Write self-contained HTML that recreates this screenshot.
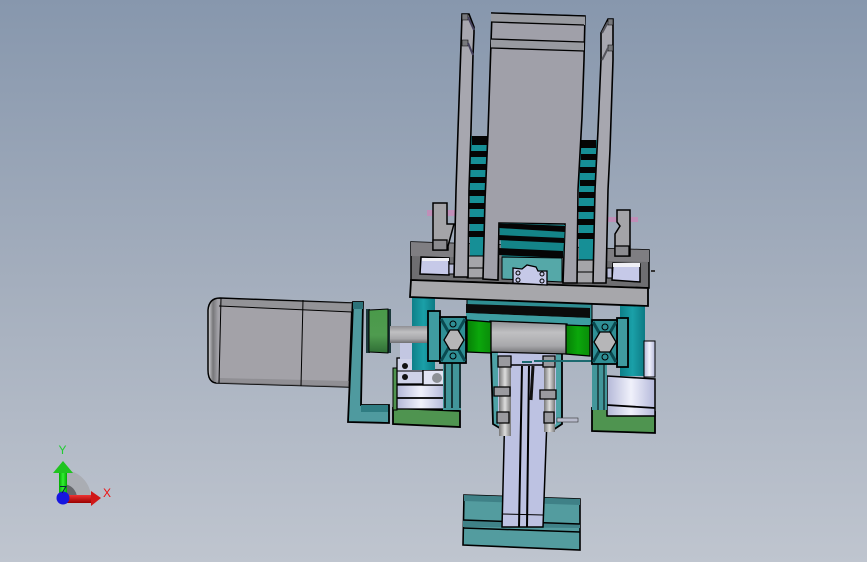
<!DOCTYPE html>
<html><head><meta charset="utf-8"><style>
html,body{margin:0;padding:0;width:867px;height:562px;overflow:hidden;background:#a3aebd}
svg{display:block}
text{font-family:"Liberation Sans",sans-serif}
</style></head><body>
<svg width="867" height="562" viewBox="0 0 867 562" xmlns="http://www.w3.org/2000/svg">
<defs>
<linearGradient id="bg" x1="0" y1="0" x2="0" y2="1"><stop offset="0" stop-color="#8797ad"/><stop offset=".5" stop-color="#a4aebd"/><stop offset="1" stop-color="#bfc5cf"/></linearGradient>
<linearGradient id="cyl" x1="0" y1="0" x2="0" y2="1"><stop offset="0" stop-color="#8f8f94"/><stop offset=".35" stop-color="#c0c0c2"/><stop offset=".75" stop-color="#a8a8ab"/><stop offset="1" stop-color="#6f6f72"/></linearGradient>
<linearGradient id="grn" x1="0" y1="0" x2="1" y2="0"><stop offset="0" stop-color="#067f06"/><stop offset=".5" stop-color="#0ba70b"/><stop offset="1" stop-color="#0a8c0a"/></linearGradient>
<linearGradient id="tealc" x1="0" y1="0" x2="1" y2="0"><stop offset="0" stop-color="#0e7f88"/><stop offset=".5" stop-color="#1aa0a8"/><stop offset="1" stop-color="#0d7a84"/></linearGradient>
<linearGradient id="wht" x1="0" y1="0" x2="1" y2="0"><stop offset="0" stop-color="#b4b8d8"/><stop offset=".5" stop-color="#f0f1fb"/><stop offset="1" stop-color="#b4b8da"/></linearGradient>
<linearGradient id="wheel" x1="0" y1="0" x2="0" y2="1"><stop offset="0" stop-color="#4a9a4a"/><stop offset=".6" stop-color="#4f9b4f"/><stop offset="1" stop-color="#2f6d35"/></linearGradient>
<linearGradient id="mot" x1="0" y1="0" x2="1" y2="0"><stop offset="0" stop-color="#d5d5d8"/><stop offset=".035" stop-color="#77777a"/><stop offset=".07" stop-color="#a3a2a8"/><stop offset="1" stop-color="#a3a2a8"/></linearGradient>
<linearGradient id="rod" x1="0" y1="0" x2="1" y2="0"><stop offset="0" stop-color="#777"/><stop offset=".5" stop-color="#ddd"/><stop offset="1" stop-color="#777"/></linearGradient>
<linearGradient id="redg" x1="0" y1="0" x2="0" y2="1"><stop offset="0" stop-color="#e33"/><stop offset="1" stop-color="#900"/></linearGradient>
<linearGradient id="greeng" x1="0" y1="0" x2="1" y2="0"><stop offset="0" stop-color="#0a0"/><stop offset=".5" stop-color="#3e3"/><stop offset="1" stop-color="#0a0"/></linearGradient>
</defs>
<rect width="867" height="562" fill="url(#bg)"/>

<!-- triad -->
<path d="M63 470A28 28 0 0 1 91 498H63Z" fill="#aaadb3"/>
<path d="M63 484A14 14 0 0 1 77 498H63Z" fill="#66686c"/>
<rect x="59" y="473" width="8" height="22" fill="url(#greeng)"/>
<path d="M63 461L53 473H73Z" fill="#1fc41f"/>
<rect x="66" y="495" width="26" height="8" fill="url(#redg)"/>
<path d="M101 498L91 491V506Z" fill="#d01818"/>
<circle cx="63" cy="498" r="6.500" fill="#1616e0"/>
<path d="M60 486.500H66L62 493" fill="none" stroke="#0a2a3a" stroke-width="1"/>
<text x="58.500" y="454" font-size="12" fill="#22cc33">Y</text>
<text x="103" y="497" font-size="12" fill="#ee1111">X</text>

<!-- lower slider base -->
<path d="M464 495L580 499V550L463 545Z" fill="#539c9f" stroke="#000" stroke-width="1.600"/>
<path d="M464 495L580 499V505L464 501Z" fill="#3f8187"/>
<path d="M463 520L580 524V528L463 527Z" fill="#3f8187"/>
<path d="M463 520L580 524M463 528L580 532" stroke="#000" stroke-width="1.500" fill="none"/>

<!-- center housing -->
<path d="M491 352H562V424L553 430H503L493 424Z" fill="#4ea2a6" stroke="#000" stroke-width="1.800"/>
<path d="M498 352H556V424L551 428H503L498 424Z" fill="#bcc1e2"/>
<!-- slider -->
<path d="M506 365H549L543 527H502Z" fill="#bdc2e2" stroke="#000" stroke-width="1.500"/>
<path d="M502 514L543 515M502 527H543" stroke="#000" fill="none"/>
<path d="M522 366L519 527M529 366L527 527" stroke="#000" stroke-width="2" fill="none"/>
<!-- rods -->
<rect x="499" y="356" width="12" height="80" fill="url(#rod)"/>
<rect x="544" y="356" width="11" height="76" fill="url(#rod)"/>
<path d="M498 356h13v11h-13ZM543 356h12v11h-12ZM494 387h16v9h-16ZM540 390h16v9h-16ZM497 412h12v11h-12ZM544 412h10v11h-10Z" fill="#9a9a9f" stroke="#000" stroke-width="1.300"/>
<path d="M522 362L532 362M534 361H592" stroke="#1c6a70" stroke-width="2"/>
<path d="M533 366L531 400" stroke="#111" stroke-width="3"/>
<rect x="557" y="418" width="21" height="4" fill="#b8bbcc" stroke="#333" stroke-width=".6"/>

<!-- left coupling + green base -->
<path d="M394 368L460 371V427L393 424Z" fill="#a5adbb" stroke="none"/>
<path d="M393 408L460 411V427L393 424Z" fill="#4f9450" stroke="#000" stroke-width="1.800"/>
<rect x="393" y="368" width="4" height="42" fill="#4f9450" stroke="#000"/>
<rect x="397" y="358" width="26" height="26" fill="#cfd2e8" stroke="#000" stroke-width="1.300"/>
<path d="M397 371H423" stroke="#000"/>
<circle cx="405" cy="366" r="3" fill="#111"/>
<circle cx="405" cy="377" r="3" fill="#111"/>
<rect x="397" y="385" width="48" height="24" fill="url(#wht)" stroke="#000" stroke-width="1.300"/>
<path d="M397 398H445" stroke="#000" stroke-width="1.800"/>
<rect x="423" y="370" width="22" height="15" fill="#e2e4f4" stroke="#000" stroke-width="1.300"/>
<circle cx="437" cy="378" r="5" fill="#8d9096"/>
<rect x="400" y="343" width="12" height="16" fill="#c3c7e2"/>

<!-- left & right cylinders -->
<rect x="412" y="298" width="23" height="72" fill="url(#tealc)"/>
<rect x="620" y="298" width="25" height="78" fill="url(#tealc)"/>
<rect x="644" y="341" width="11" height="36" fill="url(#wht)" stroke="#000"/>
<rect x="443" y="355" width="18" height="55" fill="#42969a"/>
<path d="M445 355V408M452 355V408M460 355V408" stroke="#000" stroke-width="1.300"/>

<!-- right coupling + base -->
<path d="M592 408L655 412V433L592 431Z" fill="#4f9450" stroke="#000" stroke-width="1.800"/>
<path d="M607 376L655 379V416H607Z" fill="url(#wht)" stroke="#000" stroke-width="1.500"/>
<path d="M607 405L655 408" stroke="#000" stroke-width="1.800"/>
<rect x="592" y="355" width="15" height="55" fill="#42969a"/>
<path d="M598 355V410M604 355V410" stroke="#000"/>

<!-- motor -->
<path d="M220 298L352 303L349 387L216 383Q208 382 208 370V310Q209 298 220 298Z" fill="url(#mot)" stroke="#000" stroke-width="1.500"/>
<path d="M221 299L352 303V312L219 306Z" fill="#88888c" opacity=".6"/>
<path d="M220 378L349 381V387L216 383Z" fill="#88888c" opacity=".7"/>
<path d="M219 306L352 312" stroke="#000" fill="none"/>
<path d="M221 298L219 383M303 300L301 386" stroke="#000" fill="none"/>

<!-- bracket -->
<path d="M353 302H363L361 405H389V423L348 422L352 330Z" fill="#4f9a9f" stroke="#000" stroke-width="1.800"/>
<rect x="353" y="302" width="10" height="7" fill="#2c7279"/>
<rect x="361" y="405" width="27" height="7" fill="#2f7c82"/>
<!-- green wheel -->
<rect x="366" y="309" width="4" height="44" fill="#1c3a3c"/>
<rect x="388" y="309" width="3" height="44" fill="#1c3a3c"/>
<path d="M369 310L388 309V353L369 352Z" fill="url(#wheel)" stroke="#000"/>
<!-- shaft -->
<rect x="390" y="326" width="40" height="17" fill="url(#cyl)"/>

<!-- center teal band under plate -->
<path d="M467 298H592V325H467Z" fill="#2f8d92" stroke="#000"/>
<path d="M466 304L590 308V318L466 313Z" fill="#0b0b0b"/>
<path d="M466 313L590 318V325H466Z" fill="#3d9da1"/>

<!-- profile blocks -->
<rect x="428" y="311" width="12" height="50" fill="#3f9ba0" stroke="#000" stroke-width="1.800"/>
<rect x="617" y="318" width="11" height="49" fill="#3f9ba0" stroke="#000" stroke-width="1.800"/>
<rect x="440" y="317" width="26" height="46" fill="#2f8f95" stroke="#000" stroke-width="1.800"/>
<path d="M441 319L465 361M465 319L441 361" stroke="#0a4a50" stroke-width="3"/>
<path d="M444 340L450 330H458L464 340L458 350H450Z" fill="#b6b6b8" stroke="#000" stroke-width="1.300"/>
<circle cx="453" cy="324" r="3" fill="#2f8f95" stroke="#000"/>
<circle cx="453" cy="356" r="3" fill="#2f8f95" stroke="#000"/>
<rect x="592" y="320" width="25" height="44" fill="#2f8f95" stroke="#000" stroke-width="1.800"/>
<path d="M593 322L616 362M616 322L593 362" stroke="#0a4a50" stroke-width="3"/>
<path d="M594 342L600 332H610L616 342L610 352H600Z" fill="#b6b6b8" stroke="#000" stroke-width="1.300"/>
<circle cx="605" cy="327" r="3" fill="#2f8f95" stroke="#000"/>
<circle cx="605" cy="357" r="3" fill="#2f8f95" stroke="#000"/>

<!-- main cylinder -->
<path d="M490 321L567 324V354L490 352Z" fill="url(#cyl)" stroke="#000" stroke-width="1.300"/>
<path d="M467 320L491 322V353L467 352Z" fill="url(#grn)" stroke="#000" stroke-width="1.300"/>
<path d="M566 325L590 326V356L566 354Z" fill="url(#grn)" stroke="#000" stroke-width="1.300"/>

<!-- base plates -->
<path d="M411 242L649 250V288L411 280Z" fill="#6e6e71" stroke="#000" stroke-width="1.500"/>
<path d="M411 242L649 250V262L411 256Z" fill="#7f7e82"/>
<path d="M411 280L648 288V306L410 297Z" fill="#a7a7ab" stroke="#000" stroke-width="1.800"/>

<!-- clamps -->
<rect x="427" y="210" width="28" height="6" fill="#c08fb8"/>
<rect x="608" y="217" width="30" height="5" fill="#c08fb8"/>
<path d="M433 203H447V224H454L448 246V250H433Z" fill="#a4a4a8" stroke="#000" stroke-width="1.500"/>
<rect x="433" y="240" width="14" height="10" fill="#8b8b8f" stroke="#000" stroke-width="1.300"/>
<path d="M617 210H630V256H615V234L620 226L617 222Z" fill="#a4a4a8" stroke="#000" stroke-width="1.500"/>
<rect x="615" y="246" width="14" height="10" fill="#8b8b8f" stroke="#000" stroke-width="1.300"/>
<!-- white blocks -->
<path d="M421 257L449 258V275L420 274Z" fill="#c6c9e8" stroke="#000" stroke-width="1.500"/>
<path d="M422 258H449V261H422Z" fill="#efeff5"/>
<path d="M613 263L640 264V282L612 280Z" fill="#c6c9e8" stroke="#000" stroke-width="1.500"/>
<path d="M613 263H640V267H613Z" fill="#efeff5"/>
<rect x="449" y="264" width="5" height="10" fill="#b9bcd8" stroke="#000"/>
<rect x="607" y="268" width="5" height="10" fill="#b9bcd8" stroke="#000"/>
<rect x="651" y="270" width="4" height="2" fill="#333"/>

<!-- teal stacks -->
<rect x="470" y="136" width="18" height="122" fill="#168f96"/>
<path d="M472 136h16v9h-16ZM470 151h18v6h-18ZM470 164h18v6h-18ZM470 177h17v6h-17ZM469 190h18v6h-18ZM469 203h18v6h-18ZM468 217h18v7h-18ZM468 231h18v6h-18Z" fill="#050505"/>
<rect x="579" y="140" width="18" height="122" fill="#168f96"/>
<path d="M581 140h15v8h-15ZM581 154h16v6h-16ZM580 167h16v6h-16ZM580 180h16v6h-16ZM579 192h16v6h-16ZM578 206h17v6h-17ZM578 219h16v6h-16ZM578 233h16v6h-16Z" fill="#050505"/>
<rect x="467" y="256" width="17" height="22" fill="#a5a5a9" stroke="#000"/>
<path d="M467 268H484" stroke="#000"/>
<rect x="577" y="260" width="17" height="23" fill="#a5a5a9" stroke="#000"/>
<path d="M577 272H594" stroke="#000"/>

<!-- center plate with window -->
<path d="M492 13L585 16L584 60L582 117L578 190L577 283L563 283L565 224L499 223L498 280L483 279L485 200L488 133Z" fill="#a0a0a9" stroke="#000" stroke-width="1.600"/>
<path d="M491 13L585 16V25L491 22ZM491 39L584 42V51L491 48Z" fill="#989aa0"/>
<path d="M491 13L585 16M491 22L584 25M491 39L584 42M491 48L584 51" stroke="#000" stroke-width="1.300" fill="none"/>

<!-- window content -->
<path d="M499 223L565 225L563 258H502Z" fill="#148488"/>
<path d="M499 223L565 226V232L499 228ZM498 235L564 238V243L498 240ZM498 248L563 251V258L498 255Z" fill="#050505"/>
<path d="M502 257L562 258V282L502 279Z" fill="#55a8a8" stroke="#000"/>
<path d="M513 268L522 269L527 265L536 267L538 271L547 271V285L513 283Z" fill="#c6c9e8" stroke="#000" stroke-width="1.300"/>
<circle cx="518" cy="273" r="2" fill="none" stroke="#000"/><circle cx="518" cy="280" r="2" fill="none" stroke="#000"/>
<circle cx="542" cy="274" r="2" fill="none" stroke="#000"/><circle cx="542" cy="281" r="2" fill="none" stroke="#000"/>

<!-- fingers -->
<path d="M462 14L469 14L474 27V33L473 55L471 130L469 190L468 277L454 277L456 190L458 130L461 45Z" fill="#a7a7af" stroke="#000" stroke-width="1.600"/>
<path d="M462 14h6v6h-6ZM462 40h6v6h-6Z" fill="#77787c" stroke="#000" stroke-width=".6"/>
<path d="M468 17L474 30M468 43L473 55" stroke="#44405c" stroke-width="2" fill="none"/>
<path d="M608 19L613 19V60L610 150L608 190L606 283H593L595 190L598 130L601 60V33Z" fill="#a7a7af" stroke="#000" stroke-width="1.600"/>
<path d="M608 19h5v6h-5ZM608 45h5v6h-5Z" fill="#77787c" stroke="#000" stroke-width=".6"/>
<path d="M608 22L602 33M608 48L602 60" stroke="#55555c" stroke-width="2" fill="none"/>
</svg>
</body></html>
